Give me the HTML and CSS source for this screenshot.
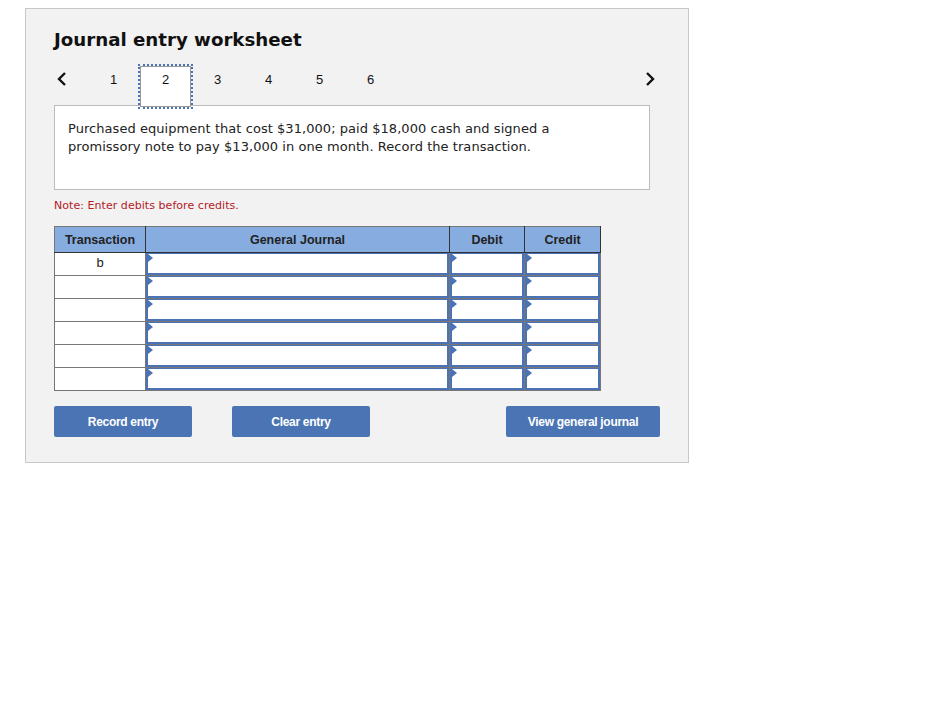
FILE: index.html
```html
<!DOCTYPE html>
<html>
<head>
<meta charset="utf-8">
<link rel="stylesheet" href="styles.css">
</head>
<body>
<div class="panel">
  <h1 class="title">Journal entry worksheet</h1>
  <div class="tabs">
    <span class="arrow">
      <svg width="12" height="16" viewBox="0 0 12 16"><path d="M9 2 L3 8 L9 14" fill="none" stroke="#111" stroke-width="2.4"/></svg>
    </span>
    <span class="tab">1</span>
    <span class="tab active">2</span>
    <span class="tab">3</span>
    <span class="tab">4</span>
    <span class="tab">5</span>
    <span class="tab">6</span>
    <span class="spacer"></span>
    <span class="arrow right">
      <svg width="12" height="16" viewBox="0 0 12 16"><path d="M3 2 L9 8 L3 14" fill="none" stroke="#111" stroke-width="2.4"/></svg>
    </span>
  </div>
  <div class="question">Purchased equipment that cost $31,000; paid $18,000 cash and signed a promissory note to pay $13,000 in one month. Record the transaction.</div>
  <p class="note">Note: Enter debits before credits.</p>
  <table class="journal">
    <thead>
      <tr><th class="c-tr">Transaction</th><th class="c-gj">General Journal</th><th class="c-db">Debit</th><th class="c-cr">Credit</th></tr>
    </thead>
    <tbody>
      <tr><td class="tx">b</td><td class="in"><div class="box"></div></td><td class="in"><div class="box"></div></td><td class="in"><div class="box"></div></td></tr>
      <tr><td class="tx"></td><td class="in"><div class="box"></div></td><td class="in"><div class="box"></div></td><td class="in"><div class="box"></div></td></tr>
      <tr><td class="tx"></td><td class="in"><div class="box"></div></td><td class="in"><div class="box"></div></td><td class="in"><div class="box"></div></td></tr>
      <tr><td class="tx"></td><td class="in"><div class="box"></div></td><td class="in"><div class="box"></div></td><td class="in"><div class="box"></div></td></tr>
      <tr><td class="tx"></td><td class="in"><div class="box"></div></td><td class="in"><div class="box"></div></td><td class="in"><div class="box"></div></td></tr>
      <tr><td class="tx"></td><td class="in"><div class="box"></div></td><td class="in"><div class="box"></div></td><td class="in"><div class="box"></div></td></tr>
    </tbody>
  </table>
  <div class="buttons">
    <button class="btn">Record entry</button>
    <button class="btn btn-clear">Clear entry</button>
    <span class="spacer"></span>
    <button class="btn btn-view">View general journal</button>
  </div>
</div>
</body>
</html>
```

FILE: styles.css
```css
html, body {
  margin: 0;
  padding: 0;
  background: #fff;
}
body {
  padding: 8px 0 0 25px;
}
.panel {
  box-sizing: border-box;
  width: 664px;
  height: 455px;
  background: #f2f2f2;
  border: 1px solid #c8c8c8;
  padding: 0 28px 0 28px;
}
.title {
  font-family: "DejaVu Sans", Verdana, sans-serif;
  font-weight: bold;
  font-size: 18.2px;
  color: #111;
  margin: 20px 0 0 0;
  line-height: 22px;
}
.tabs {
  display: flex;
  align-items: flex-start;
  height: 43px;
  margin-top: 14px;
  margin-bottom: -3px;
  position: relative;
  z-index: 2;
  font-family: "Liberation Sans", Arial, sans-serif;
  font-size: 13px;
  color: #111;
}
.arrow {
  width: 34px;
  display: flex;
  align-items: center;
  padding-left: 2px;
  padding-top: 6px;
  box-sizing: border-box;
}
.arrow.right {
  width: 20px;
  padding-left: 0;
  margin-right: -4px;
}
.tab {
  width: 51px;
  height: 43px;
  display: flex;
  justify-content: center;
  box-sizing: border-box;
  padding-top: 7px;
  line-height: 15px;
}
.tab.active {
  background: #fff;
  border: 1px solid #999;
  outline: 2px dotted #4a72b5;
  outline-offset: 0;
  width: 51px;
  height: 41px;
  margin: 1px 1px 0 1px;
  padding-top: 5px;
}
.spacer {
  flex: 1;
}
.question {
  box-sizing: border-box;
  width: 596px;
  height: 85px;
  background: #fff;
  border: 1px solid #bcbcbc;
  padding: 14px 60px 0 13px;
  font-family: "DejaVu Sans", Verdana, sans-serif;
  font-size: 13px;
  letter-spacing: 0.05px;
  line-height: 18px;
  color: #222;
  position: relative;
  z-index: 1;
}
.note {
  font-family: "DejaVu Sans", Verdana, sans-serif;
  font-size: 11px;
  letter-spacing: 0.05px;
  color: #b3201f;
  margin: 9px 0 0 0;
  line-height: 14px;
}
.journal {
  border-collapse: collapse;
  margin-top: 13px;
  font-family: "Liberation Sans", Arial, sans-serif;
  font-size: 12.5px;
  table-layout: fixed;
  width: 546px;
}
.journal th {
  background: #86ace0;
  border: 1px solid #333;
  border-top-color: #777;
  height: 26px;
  box-sizing: border-box;
  padding: 0;
  font-weight: bold;
  color: #222;
  text-align: center;
}
.journal th.c-tr { border-left-color: #777; }
.c-tr { width: 91px; }
.c-gj { width: 304px; }
.c-db { width: 75px; }
.c-cr { width: 76px; }
.journal td {
  height: 23px;
  box-sizing: border-box;
  padding: 0;
  border: 1px solid #777;
  background: #fff;
}
.journal td.tx {
  text-align: center;
  color: #222;
  font-size: 13px;
  vertical-align: top;
  line-height: 20px;
}
.journal td.in {
  vertical-align: top;
}
.box {
  box-sizing: border-box;
  height: 22px;
  border: 2px solid #4a72b5;
  border-top-width: 1px;
  position: relative;
  background: #fff;
}
.box::before {
  content: "";
  position: absolute;
  left: 0;
  top: 0;
  width: 0;
  height: 0;
  border-top: 4px solid transparent;
  border-bottom: 4px solid transparent;
  border-left: 5px solid #4a72b5;
}
.buttons {
  display: flex;
  margin-top: 15px;
}
.btn {
  width: 138px;
  height: 31px;
  background: #4a74b4;
  border: none;
  border-radius: 2px;
  color: #fff;
  font-family: "Liberation Sans", Arial, sans-serif;
  font-weight: bold;
  font-size: 12px;
  letter-spacing: -0.3px;
  padding: 0;
}
.btn-clear {
  margin-left: 40px;
}
.btn-view {
  width: 154px;
}
```
